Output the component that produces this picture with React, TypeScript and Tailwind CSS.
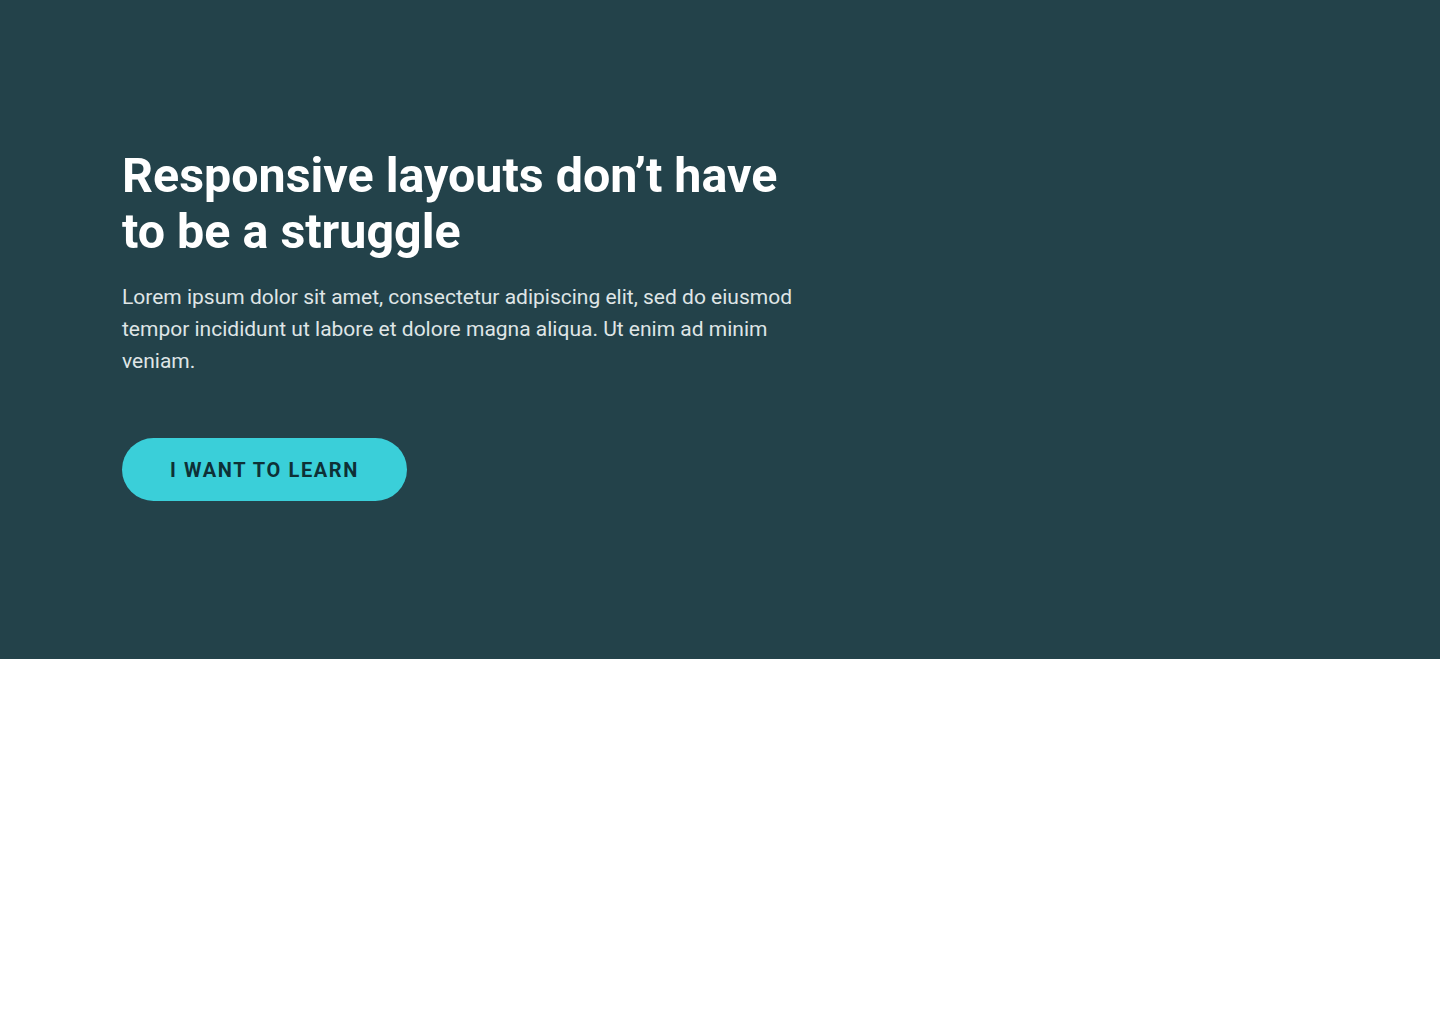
import React from "react";

export default function App() {
  return (
    <div className="min-h-screen bg-white" style={{ fontFamily: "Roboto, 'Noto Sans', sans-serif" }}>
      <section className="bg-[#23424a] h-[659px] pl-[122px] pt-[148px]">
        <div className="max-w-[700px]">
          <h1 className="text-[48.4px] leading-[56px] font-bold text-white">
            Responsive layouts don’t have to be a struggle
          </h1>
          <p className="mt-[21px] text-[21px] leading-[32px] text-[#dfe5e6]">
            Lorem ipsum dolor sit amet, consectetur adipiscing elit, sed do eiusmod tempor incididunt ut labore et dolore magna aliqua. Ut enim ad minim veniam.
          </p>
          <button className="mt-[61px] h-[63px] w-[285px] rounded-full bg-[#3acfd9] text-[#0e3036] text-[20px] font-bold tracking-[0.08em] uppercase">
            I want to learn
          </button>
        </div>
      </section>
    </div>
  );
}
